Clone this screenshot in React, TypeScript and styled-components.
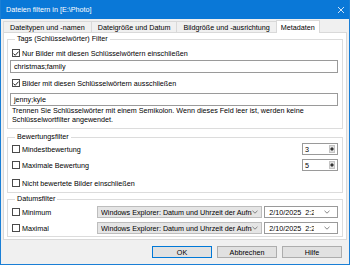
import React from "react";
import styled, { createGlobalStyle } from "styled-components";

const Global = createGlobalStyle`
  html, body { margin: 0; padding: 0; background: #ffffff; }
  body { font-family: "Liberation Sans", Arial, sans-serif; font-size: 7.2px; color: #000; }
  * { box-sizing: border-box; }
`;

const Window = styled.div`
  width: 350px;
  height: 265px;
  border: 1px solid #1a7fd6;
  border-top: none;
  background: #f0f0f0;
  display: flex;
  flex-direction: column;
  overflow: hidden;
`;

const TitleBar = styled.div`
  height: 19px;
  margin: 0 -1px;
  background: #0a78d7;
  color: #fff;
  display: flex;
  align-items: center;
  justify-content: space-between;
  padding: 0 6px 0 6px;
  font-size: 7.2px;
  flex: none;
`;

const Body = styled.div`
  padding: 1px 2px 0 2px;
  display: flex;
  flex-direction: column;
  flex: 1;
`;

const TabStrip = styled.div`
  display: flex;
  height: 12px;
  align-items: flex-end;
  position: relative;
  z-index: 1;
`;

const Tab = styled.div<{ $active?: boolean }>`
  height: ${(p) => (p.$active ? "13px" : "11px")};
  padding: 0 ${(p) => (p.$active ? "4px" : "6px")};
  display: flex;
  align-items: center;
  border: 1px solid #d9d9d9;
  border-bottom: none;
  margin-left: -1px;
  background: ${(p) => (p.$active ? "#ffffff" : "#f0f0f0")};
  margin-bottom: ${(p) => (p.$active ? "-1px" : "0")};
  white-space: nowrap;
  &:first-child { margin-left: 0; }
`;

const Panel = styled.div`
  background: #fff;
  border: 1px solid #d9d9d9;
  padding: 0 3px 2px 3px;
  display: flex;
  flex-direction: column;
`;

const Group = styled.fieldset<{ $mt: number; $pb: number }>`
  margin: ${(p) => p.$mt}px 0 0 0;
  border: 1px solid #dcdcdc;
  padding: 0 4px ${(p) => p.$pb}px 4px;
  display: flex;
  flex-direction: column;
  min-width: 0;
`;

const Legend = styled.legend`
  padding: 0 2px;
  margin-left: 3px;
  line-height: 10px;
  height: 10px;
`;

const CheckRow = styled.label<{ $mt?: number }>`
  display: flex;
  align-items: center;
  gap: 2px;
  height: 10px;
  margin-top: ${(p) => p.$mt ?? 0}px;
  white-space: nowrap;
`;

const Box = styled.span`
  width: 8px;
  height: 8px;
  border: 1px solid #4a4a4a;
  background: #fff;
  display: inline-flex;
  align-items: center;
  justify-content: center;
  flex: none;
`;

const TextBox = styled.div<{ $mt?: number }>`
  height: 13px;
  border: 1px solid #9a9a9a;
  margin-top: ${(p) => p.$mt ?? 0}px;
  margin-left: -2px;
  padding: 0 3px;
  display: flex;
  align-items: center;
`;

const Hint = styled.div`
  margin-top: 1px;
  line-height: 8.5px;
`;

const RatingRow = styled.div<{ $mt?: number }>`
  display: flex;
  align-items: center;
  justify-content: space-between;
  height: 12px;
  margin-top: ${(p) => p.$mt ?? 0}px;
`;

const Spin = styled.div`
  width: 36px;
  height: 12px;
  border: 1px solid #9a9a9a;
  display: flex;
  align-items: center;
  justify-content: space-between;
  padding-left: 2px;
  padding-right: 2px;
`;

const SpinBtn = styled.span`
  width: 6px;
  height: 8px;
  background: #e0e0e0;
  border: 1px solid #c4c4c4;
  display: flex;
  flex-direction: column;
  align-items: center;
  justify-content: space-evenly;
`;

const DateRow = styled.div<{ $mt?: number }>`
  display: flex;
  align-items: center;
  height: 12px;
  margin-top: ${(p) => p.$mt ?? 0}px;
`;

const DateLabel = styled(CheckRow)`
  width: 85px;
  flex: none;
`;

const Combo = styled.div`
  width: 166px;
  height: 12px;
  background: #e5e5e5;
  border: 1px solid #bdbdbd;
  display: flex;
  align-items: center;
  justify-content: space-between;
  padding: 0 3px 0 3px;
  white-space: nowrap;
  overflow: hidden;
`;

const Clip = styled.span<{ $w: number }>`
  width: ${(p) => p.$w}px;
  overflow: hidden;
  white-space: nowrap;
  display: inline-block;
  vertical-align: top;
`;

const DateField = styled.div`
  width: 74px;
  height: 12px;
  margin-left: 2px;
  border: 1px solid #9a9a9a;
  background: #fff;
  display: flex;
  align-items: center;
  justify-content: space-between;
  padding: 0 7px 0 4px;
  white-space: nowrap;
`;

const ButtonBar = styled.div`
  display: flex;
  justify-content: flex-end;
  gap: 5px;
  padding: 6px 5px 0 0;
`;

const Button = styled.div<{ $default?: boolean }>`
  width: 60px;
  height: 12px;
  background: #e1e1e1;
  border: 1px solid ${(p) => (p.$default ? "#0078d7" : "#adadad")};
  display: flex;
  align-items: center;
  justify-content: center;
`;

const Chevron = () => (
  <svg width="6" height="4" viewBox="0 0 6 4">
    <path d="M0.5 0.8 L3 3.2 L5.5 0.8" fill="none" stroke="#666" strokeWidth="0.8" />
  </svg>
);

const Check = ({ on }: { on?: boolean }) => (
  <Box>
    {on && (
      <svg width="6" height="5" viewBox="0 0 6 5">
        <path d="M0.4 2.5 L2.2 4.3 L5.6 0.6" fill="none" stroke="#222" strokeWidth="1" />
      </svg>
    )}
  </Box>
);

const Arrows = () => (
  <SpinBtn>
    <svg width="4" height="2" viewBox="0 0 4 2"><path d="M0 2 L2 0 L4 2Z" fill="#333" /></svg>
    <svg width="4" height="2" viewBox="0 0 4 2"><path d="M0 0 L2 2 L4 0Z" fill="#333" /></svg>
  </SpinBtn>
);

const DateRowContent = ({ label }: { label: string }) => (
  <>
    <DateLabel><Check />{label}</DateLabel>
    <Combo><Clip $w={152}>Windows Explorer: Datum und Uhrzeit der Aufnahme</Clip><Chevron /></Combo>
    <DateField><span>2/10/2025 &nbsp;<Clip $w={9}>2:27</Clip></span><Chevron /></DateField>
  </>
);

export default function App() {
  return (
    <>
      <Global />
      <Window>
        <TitleBar>
          <span>Dateien filtern in [E:\Photo]</span>
          <svg width="6" height="6" viewBox="0 0 6 6">
            <path d="M0 0 L6 6 M6 0 L0 6" stroke="#fff" strokeWidth="0.8" />
          </svg>
        </TitleBar>
        <Body>
          <TabStrip>
            <Tab>Dateitypen und -namen</Tab>
            <Tab>Dateigröße und Datum</Tab>
            <Tab>Bildgröße und -ausrichtung</Tab>
            <Tab $active>Metadaten</Tab>
          </TabStrip>
          <Panel>
            <Group $mt={1} $pb={4}>
              <Legend>Tags (Schlüsselwörter) Filter</Legend>
              <CheckRow $mt={4}><Check on />Nur Bilder mit diesen Schlüsselwörtern einschließen</CheckRow>
              <TextBox $mt={2}>christmas;family</TextBox>
              <CheckRow $mt={5}><Check on />Bilder mit diesen Schlüsselwörtern ausschließen</CheckRow>
              <TextBox $mt={5}>jenny;kyle</TextBox>
              <Hint>
                Trennen Sie Schlüsselwörter mit einem Semikolon. Wenn dieses Feld leer ist, werden keine
                <br />
                Schlüsselwortfilter angewendet.
              </Hint>
            </Group>
            <Group $mt={3} $pb={4}>
              <Legend>Bewertungsfilter</Legend>
              <RatingRow $mt={1}>
                <CheckRow><Check />Mindestbewertung</CheckRow>
                <Spin>3<Arrows /></Spin>
              </RatingRow>
              <RatingRow $mt={4}>
                <CheckRow><Check />Maximale Bewertung</CheckRow>
                <Spin>5<Arrows /></Spin>
              </RatingRow>
              <CheckRow $mt={7}><Check />Nicht bewertete Bilder einschließen</CheckRow>
            </Group>
            <Group $mt={1} $pb={2}>
              <Legend>Datumsfilter</Legend>
              <DateRow $mt={2}>
                <DateRowContent label="Minimum" />
              </DateRow>
              <DateRow $mt={4}>
                <DateRowContent label="Maximal" />
              </DateRow>
            </Group>
          </Panel>
          <ButtonBar>
            <Button $default>OK</Button>
            <Button>Abbrechen</Button>
            <Button>Hilfe</Button>
          </ButtonBar>
        </Body>
      </Window>
    </>
  );
}
